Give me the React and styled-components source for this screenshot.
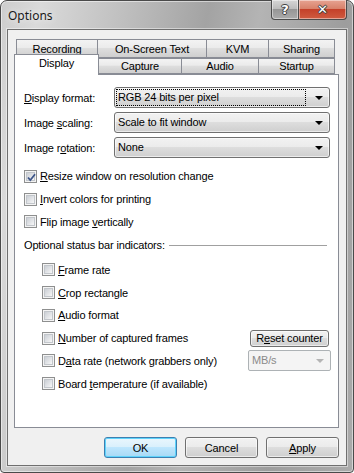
import React from 'react';
import styled, { createGlobalStyle } from 'styled-components';

const GlobalStyle = createGlobalStyle`
  html, body { margin: 0; padding: 0; background: #fff; }
  body {
    font-family: "Liberation Sans", Arial, sans-serif;
    font-size: 11px;
    letter-spacing: -0.15px;
    color: #000;
  }
  u { text-decoration: underline; text-underline-offset: 1px; }
`;

const Window = styled.div`
  box-sizing: border-box;
  width: 354px;
  height: 473px;
  display: flex;
  flex-direction: column;
  padding: 0 6px 6px;
  border: 1px solid #4a4a4a;
  border-radius: 7px 7px 4px 4px;
  background: linear-gradient(100deg, #cdcdcd 0%, #dadada 9%, #c0c0c0 28%, #a3a3a3 48%, #b4b4b4 60%, #9d9d9d 80%, #ababab 100%);
  box-shadow: inset 0 0 0 1px rgba(255, 255, 255, 0.5);
`;

const TitleBar = styled.div`
  height: 28px;
  flex: none;
  display: flex;
  justify-content: space-between;
  align-items: flex-start;
`;

const Title = styled.div`
  font-family: "Noto Sans", "Open Sans", sans-serif;
  font-size: 12px;
  letter-spacing: 0;
  line-height: 16px;
  padding: 7px 0 0 1px;
  color: #1a1a1a;
  text-shadow: 0 0 6px rgba(255, 255, 255, 0.9);
`;

const CaptionButtons = styled.div`
  display: flex;
  margin-top: -1px;
`;

const CaptionButton = styled.div`
  box-sizing: border-box;
  width: ${p => (p.$close ? 48 : 28)}px;
  height: 20px;
  display: flex;
  align-items: center;
  justify-content: center;
  border: 1px solid #4b4b4b;
  border-top: none;
  border-left-width: ${p => (p.$close ? 0 : 1)}px;
  border-radius: ${p => (p.$close ? '0 0 4px 0' : '0 0 0 4px')};
  background: ${p =>
    p.$close
      ? 'linear-gradient(#e7a392 0%, #d8826b 45%, #c4412a 50%, #cf5b40 100%)'
      : 'linear-gradient(#d6d6d6 0%, #bdbdbd 45%, #969696 50%, #ababab 100%)'};
  box-shadow: inset 0 0 0 1px rgba(255, 255, 255, 0.45);
  color: #fff;
  font-family: "DejaVu Sans", sans-serif;
  font-weight: bold;
  font-size: 13px;
  letter-spacing: 0;
  text-shadow: 0 0 1px #333, 1px 0 0 #444, -1px 0 0 #444, 0 1px 0 #444, 0 -1px 0 #444;
`;

const Client = styled.div`
  flex: 1;
  display: flex;
  flex-direction: column;
  padding: 9px 7px 7px 6px;
  background: #f0f0f0;
  border: 1px solid #6f6f6f;
  box-shadow: 0 0 0 1px rgba(255, 255, 255, 0.45);
`;

const TabRow = styled.div`
  display: flex;
  align-items: flex-end;
  height: ${p => p.$height}px;
  padding-left: ${p => p.$inset}px;
`;

const Tab = styled.div`
  box-sizing: border-box;
  width: ${p => p.$width}px;
  height: ${p => (p.$selected ? 21 : p.$back ? 19 : 16)}px;
  margin-left: ${p => (p.$first ? 0 : -1)}px;
  margin-top: ${p => (p.$selected ? -5 : 0)}px;
  margin-bottom: ${p => (p.$selected ? -1 : 0)}px;
  position: ${p => (p.$selected ? 'relative' : 'static')};
  z-index: ${p => (p.$selected ? 1 : 'auto')};
  align-self: ${p => (p.$back ? 'flex-start' : 'flex-end')};
  display: flex;
  justify-content: center;
  align-items: ${p => (p.$back ? 'flex-start' : 'center')};
  padding-top: ${p => (p.$back ? 3 : 0)}px;
  padding-bottom: ${p => (p.$selected ? 3 : 0)}px;
  border: 1px solid #898c95;
  border-bottom: ${p => (p.$selected ? 'none' : '1px solid #898c95')};
  background: ${p =>
    p.$selected ? '#fff' : 'linear-gradient(#f3f3f3 0%, #ebebeb 45%, #dedede 50%, #cfcfcf 100%)'};
  line-height: 13px;
`;

const Panel = styled.div`
  flex: 1;
  display: flex;
  flex-direction: column;
  padding: 12px 8px 0 9px;
  background: #fff;
  border: 1px solid #898c95;
`;

const FieldGrid = styled.div`
  display: grid;
  grid-template-columns: 90px 1fr;
  row-gap: 4px;
  align-items: center;
  margin-bottom: 7px;
`;

const Combo = styled.div`
  box-sizing: border-box;
  height: 21px;
  display: flex;
  align-items: center;
  padding: 0 2px 0 2px;
  border: 1px solid ${p => (p.$disabled ? '#adb2b5' : '#707070')};
  border-radius: 3px;
  background: ${p =>
    p.$disabled ? '#f4f4f4' : 'linear-gradient(#f2f2f2 0%, #ebebeb 49%, #dddddd 50%, #cfcfcf 100%)'};
  color: ${p => (p.$disabled ? '#8a8a8a' : '#000')};
  box-shadow: ${p => (p.$disabled ? 'none' : 'inset 0 0 0 1px rgba(255,255,255,0.6)')};
`;

const ComboText = styled.span`
  flex: 1;
  height: 15px;
  line-height: 15px;
  padding-left: 1px;
  outline: ${p => (p.$focused ? '1px dotted #000' : 'none')};
  margin-right: 10px;
`;

const Arrow = styled.span`
  width: 0;
  height: 0;
  margin-right: 4px;
  border-left: 4px solid transparent;
  border-right: 4px solid transparent;
  border-top: 4px solid ${p => (p.$disabled ? '#b4b4b4' : '#000')};
`;

const CheckRow = styled.div`
  height: 22.75px;
  display: flex;
  align-items: center;
  gap: 3px;
  padding-left: ${p => (p.$indent ? 18 : 0)}px;
`;

const CheckLabel = styled.span`
  flex: 1;
  white-space: nowrap;
`;

const Box = styled.span`
  box-sizing: border-box;
  width: 13px;
  height: 13px;
  flex: none;
  display: flex;
  padding: 1px;
  border: 1px solid #8e8f8f;
  background: #f4f4f4;
  position: relative;
`;

const BoxFill = styled.span`
  flex: 1;
  border: 1px solid #c2c6cb;
  background: linear-gradient(135deg, #cbcfd5 0%, #e2e4e7 55%, #f7f7f7 100%);
`;

const CheckMark = styled.svg`
  position: absolute;
  left: 0;
  top: 0;
`;

const SectionHeading = styled.div`
  height: 22.75px;
  display: flex;
  align-items: center;
  margin-bottom: 2.5px;
`;

const Rule = styled.span`
  flex: 1;
  height: 1px;
  margin: 1px 3px 0 4px;
  background: #a0a0a0;
`;

const SmallButton = styled.button`
  box-sizing: border-box;
  width: 79px;
  height: 17px;
  margin-right: 1px;
  padding: 0;
  font: 11px "Liberation Sans", Arial, sans-serif;
  letter-spacing: -0.15px;
  color: #000;
  border: 1px solid #707070;
  border-radius: 3px;
  background: linear-gradient(#f2f2f2 0%, #ebebeb 49%, #dddddd 50%, #cfcfcf 100%);
  box-shadow: inset 0 0 0 1px rgba(255, 255, 255, 0.6);
`;

const RateCombo = styled(Combo)`
  width: 83px;
  height: 21px;
  margin-right: -1px;
  border-radius: 2px;
`;

const ButtonBar = styled.div`
  display: flex;
  justify-content: flex-end;
  gap: 8px;
  margin-top: 9px;
`;

const DialogButton = styled.button`
  box-sizing: border-box;
  width: 73px;
  height: 21px;
  padding: 0;
  font: 11px "Liberation Sans", Arial, sans-serif;
  letter-spacing: -0.15px;
  color: #000;
  border: 1px solid ${p => (p.$default ? '#3c7fb1' : '#707070')};
  border-radius: 3px;
  background: ${p =>
    p.$default
      ? 'linear-gradient(#eaf6fd 0%, #d9f0fc 49%, #bee6fd 50%, #a7d9f5 100%)'
      : 'linear-gradient(#f2f2f2 0%, #ebebeb 49%, #dddddd 50%, #cfcfcf 100%)'};
  box-shadow: inset 0 0 0 1px ${p => (p.$default ? '#5ed3fb' : 'rgba(255,255,255,0.6)')};
`;

const Check = ({ checked, indent, children, extra }) => (
  <CheckRow $indent={indent}>
    <Box>
      <BoxFill />
      {checked && (
        <CheckMark width="13" height="13" viewBox="0 0 13 13">
          <path d="M3 6.5 L5.3 9.2 L10 3.3" fill="none" stroke="#3d5589" strokeWidth="1.8" />
        </CheckMark>
      )}
    </Box>
    <CheckLabel>{children}</CheckLabel>
    {extra}
  </CheckRow>
);

const ComboBox = ({ value, focused }) => (
  <Combo>
    <ComboText $focused={focused}>{value}</ComboText>
    <Arrow />
  </Combo>
);

const backTabs = [
  { label: 'Recording', width: 82 },
  { label: 'On-Screen Text', width: 110 },
  { label: 'KVM', width: 63 },
  { label: 'Sharing', width: 67 },
];

const frontTabs = [
  { label: 'Display', width: 85, selected: true },
  { label: 'Capture', width: 84 },
  { label: 'Audio', width: 78 },
  { label: 'Startup', width: 77 },
];

export default function App() {
  return (
    <>
      <GlobalStyle />
      <Window>
        <TitleBar>
          <Title>Options</Title>
          <CaptionButtons>
            <CaptionButton>?</CaptionButton>
            <CaptionButton $close>✕</CaptionButton>
          </CaptionButtons>
        </TitleBar>
        <Client>
          <TabRow $height={19} $inset={2}>
            {backTabs.map((t, i) => (
              <Tab key={t.label} $width={t.width} $first={i === 0} $back>
                {t.label}
              </Tab>
            ))}
          </TabRow>
          <TabRow $height={16} $inset={0}>
            {frontTabs.map((t, i) => (
              <Tab key={t.label} $width={t.width} $first={i === 0} $selected={t.selected}>
                {t.label}
              </Tab>
            ))}
          </TabRow>
          <Panel>
            <FieldGrid>
              <span><u>D</u>isplay format:</span>
              <ComboBox value="RGB 24 bits per pixel" focused />
              <span>Image <u>s</u>caling:</span>
              <ComboBox value="Scale to fit window" />
              <span>Image r<u>o</u>tation:</span>
              <ComboBox value="None" />
            </FieldGrid>
            <Check checked><u>R</u>esize window on resolution change</Check>
            <Check><u>I</u>nvert colors for printing</Check>
            <Check>Flip image <u>v</u>ertically</Check>
            <SectionHeading>
              Optional status bar indicators:
              <Rule />
            </SectionHeading>
            <Check indent><u>F</u>rame rate</Check>
            <Check indent><u>C</u>rop rectangle</Check>
            <Check indent><u>A</u>udio format</Check>
            <Check indent extra={<SmallButton>R<u>e</u>set counter</SmallButton>}>
              <u>N</u>umber of captured frames
            </Check>
            <Check
              indent
              extra={
                <RateCombo $disabled>
                  <ComboText>MB/s</ComboText>
                  <Arrow $disabled />
                </RateCombo>
              }
            >
              D<u>a</u>ta rate (network grabbers only)
            </Check>
            <Check indent>Board <u>t</u>emperature (if available)</Check>
          </Panel>
          <ButtonBar>
            <DialogButton $default>OK</DialogButton>
            <DialogButton>Cancel</DialogButton>
            <DialogButton><u>A</u>pply</DialogButton>
          </ButtonBar>
        </Client>
      </Window>
    </>
  );
}
